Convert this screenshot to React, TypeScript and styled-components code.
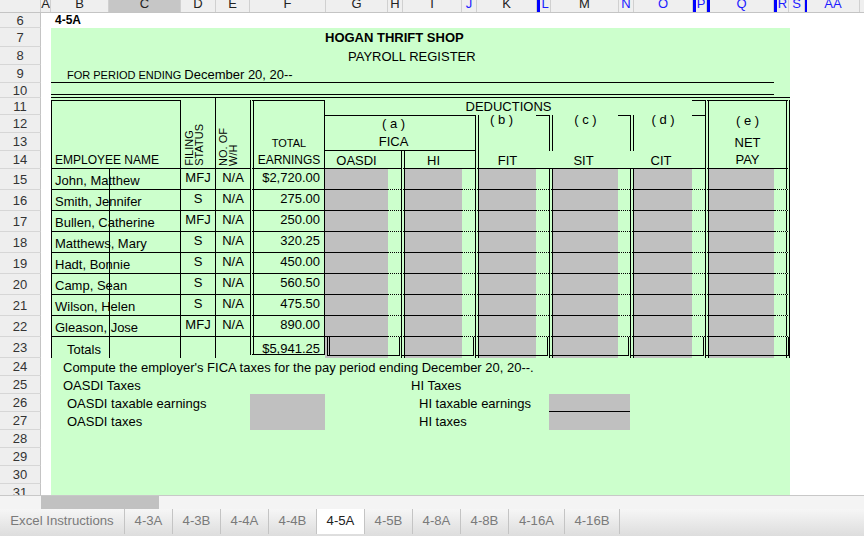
import styled, { createGlobalStyle, css } from 'styled-components'

const GREEN = '#ccffcc'
const GRAY = '#c0c0c0'
const INK = '#000'

const GlobalStyle = createGlobalStyle`
  * { box-sizing: border-box; }
  html, body { margin: 0; padding: 0; background: #fff; }
  body { font-family: 'Liberation Sans', Arial, sans-serif; color: #000; overflow: hidden; }
`

// sheet columns, in grid order (ROW = the row-number gutter)
const COLS = ['ROW', 'A', 'B', 'C', 'D', 'E', 'F', 'G', 'H', 'I', 'J', 'K', 'L', 'M', 'N', 'O', 'P', 'Q', 'R', 'S', 'AA', 'REST']
const colAt = (c: string) => COLS.indexOf(c) + 1
const colSpan = (from: string, to: string = from) => `${colAt(from)} / ${colAt(to) + 1}`
const rowSpan = (from: number, to: number = from) => `${from - 5} / ${to - 4}`

type Place = { $c: string; $ce?: string; $r: number; $re?: number }

const placed = css<Place>`
  grid-column: ${p => colSpan(p.$c, p.$ce)};
  grid-row: ${p => rowSpan(p.$r, p.$re)};
  min-width: 0;
`

const Window = styled.div`
  width: 864px;
  height: 536px;
  display: flex;
  flex-direction: column;
  overflow: hidden;
`

/* column letters */
const ColBar = styled.div`
  flex: 0 0 13px;
  display: flex;
  background: #efefef;
  border-bottom: 1px solid #c4c4c4;
  overflow: hidden;
`

const ColHead = styled.div<{ $w: number; $blue?: boolean; $sel?: boolean }>`
  flex: 0 0 ${p => p.$w}px;
  height: 12px;
  border-right: 1px solid #d0d0d0;
  background: ${p => (p.$sel ? '#c6c6c6' : 'transparent')};
  color: ${p => (p.$blue ? '#1c1cff' : '#222')};
  font-size: 13px;
  line-height: 7px;
  text-align: center;
  overflow: hidden;
  white-space: nowrap;
`

const HiddenMark = styled.div<{ $w: number }>`
  flex: 0 0 ${p => p.$w}px;
  background: #0000ff;
`

/* the sheet body */
const Sheet = styled.div`
  flex: 0 0 482px;
  display: grid;
  grid-template-columns: 41px 10px 58px 72px 35px 34px 75px 63px 13px 61px 13px 61px 13px 69px 12px 62px 13px 69px 16px 17px 53px 1fr;
  grid-template-rows: 15px 19px 18px 18px 15px 17px 18px 18px 18px repeat(8, 21px) 21px repeat(8, 18px);
  overflow: hidden;
  font-size: 13px;
`

const RowNum = styled.div<{ $r: number }>`
  grid-column: 1 / 2;
  grid-row: ${p => rowSpan(p.$r)};
  display: flex;
  align-items: center;
  justify-content: center;
  background: #eeeeee;
  border-right: 1px solid #c4c4c4;
  border-bottom: 1px solid #d6d6d6;
  color: #333;
  font-size: 13px;
`

const Panel = styled.div<Place>`
  ${placed}
  background: ${GREEN};
`

const SheetTitle = styled.div<Place>`
  ${placed}
  padding-left: 4px;
  font-size: 12px;
  font-weight: bold;
  line-height: 14px;
  white-space: nowrap;
`

const TitleLine = styled.div<Place & { $bold?: boolean; $indent: number }>`
  ${placed}
  display: flex;
  align-items: center;
  padding-left: ${p => p.$indent}px;
  font-size: 13px;
  font-weight: ${p => (p.$bold ? 'bold' : 'normal')};
  white-space: nowrap;
`

const PeriodLine = styled.div<Place>`
  ${placed}
  display: flex;
  align-items: baseline;
  gap: 3px;
  padding: 2px 0 0 16px;
  border-bottom: 1px solid ${INK};
  font-size: 13px;
  line-height: 15px;
  white-space: nowrap;

  small { font-size: 11px; }
`

const Rule = styled.div<Place & { $double?: boolean }>`
  ${placed}
  border-bottom: ${p => (p.$double ? '4px double' : '1px solid')} ${INK};
`

/* table heading */
const NameHead = styled.div<Place>`
  ${placed}
  margin-top: 2px;
  border: 1px solid ${INK};
  display: flex;
  align-items: flex-end;
  padding: 0 0 0 3px;
  font-size: 12px;
  line-height: 16px;
  white-space: nowrap;
`

const RotHead = styled.div<Place & { $edge?: boolean; $pad: number }>`
  ${placed}
  display: flex;
  align-items: flex-end;
  padding: 0 0 2px ${p => p.$pad}px;
  border-right: ${p => (p.$edge ? `1px solid ${INK}` : 'none')};
  border-bottom: 1px solid ${INK};
`

const RotText = styled.span`
  writing-mode: vertical-rl;
  transform: rotate(180deg);
  font-size: 11px;
  line-height: 10px;
  white-space: pre;
`

const EarnHead = styled.div<Place>`
  ${placed}
  margin-top: 2px;
  border-top: 1px solid ${INK};
  border-right: 1px solid ${INK};
  border-bottom: 1px solid ${INK};
  border-left: 4px double ${INK};
  display: flex;
  flex-direction: column;
  justify-content: flex-end;
  align-items: center;
  line-height: 18px;
  white-space: nowrap;
`

const HeadWord = styled.span<{ $size: number }>`
  font-size: ${p => p.$size}px;
  margin-bottom: -1px;
`

const DedTitle = styled.div<Place>`
  ${placed}
  text-align: center;
  font-size: 13px;
  line-height: 18px;
`

const StubTop = styled.div<Place & { $drop?: boolean }>`
  ${placed}
  margin-top: ${p => (p.$drop ? '2px' : '0')};
  border-top: 1px solid ${INK};
`

const FicaBox = styled.div<Place>`
  ${placed}
  border-top: 1px solid ${INK};
  border-bottom: 1px solid ${INK};
`

const FicaText = styled.div<Place>`
  ${placed}
  text-align: center;
  font-size: 13px;
  line-height: 18px;
  white-space: pre;
`

const SideHead = styled.div<Place & { $nudge?: number }>`
  ${placed}
  border-left: 4px double ${INK};
  padding-right: ${p => p.$nudge ?? 0}px;
  text-align: center;
  font-size: 13px;
  line-height: 13px;
  white-space: pre;
`

const Tag = styled.div`
  margin-top: -2px;
`

const SubHead = styled.div<Place & { $split?: boolean; $gap: number }>`
  ${placed}
  border-bottom: 1px solid ${INK};
  border-left: ${p => (p.$split ? `4px double ${INK}` : 'none')};
  padding: 1px ${p => p.$gap}px 0 0;
  text-align: center;
  font-size: 13px;
  line-height: 17px;
`

const NetBox = styled.div<Place>`
  ${placed}
  margin-top: 2px;
  border-top: 1px solid ${INK};
  border-bottom: 1px solid ${INK};
  border-left: 4px double ${INK};
  border-right: 4px double ${INK};
  display: flex;
  flex-direction: column;
  justify-content: flex-end;
  align-items: center;
  font-size: 13px;
  line-height: 18px;
  white-space: pre;

  span { margin-bottom: -1px; }

  span:first-child {
    line-height: 13px;
    margin-bottom: 7px;
  }
`

/* table body */
const NameCell = styled.div<Place & { $indent: number }>`
  ${placed}
  display: flex;
  align-items: flex-end;
  padding-left: ${p => p.$indent}px;
  border-left: 1px solid ${INK};
  border-bottom: ${p => (p.$r === 23 ? 'none' : `1px solid ${INK}`)};
  line-height: 16px;
  white-space: nowrap;
`

const NameSplit = styled.div<Place & { $open?: boolean }>`
  ${placed}
  border-left: 1px solid ${INK};
  border-right: 1px solid ${INK};
  border-bottom: ${p => (p.$open ? 'none' : `1px solid ${INK}`)};
`

const CodeCell = styled.div<Place & { $edge?: boolean; $open?: boolean }>`
  ${placed}
  padding-top: 1px;
  border-right: ${p => (p.$edge ? `1px solid ${INK}` : 'none')};
  border-bottom: ${p => (p.$open ? 'none' : `1px solid ${INK}`)};
  text-align: center;
  line-height: 16px;
`

const AmountCell = styled.div<Place & { $total?: boolean }>`
  ${placed}
  padding: ${p => (p.$total ? '4px' : '1px')} 4px 0 0;
  margin-bottom: ${p => (p.$total ? '3px' : '0')};
  border-left: 4px double ${INK};
  border-right: 1px solid ${INK};
  border-bottom: 1px solid ${INK};
  text-align: right;
  line-height: 16px;
  white-space: nowrap;
`

const InputCell = styled.div<Place & { $split?: boolean; $open?: boolean }>`
  ${placed}
  background: ${GRAY};
  background-clip: padding-box;
  border-left: ${p => (p.$split ? `4px double ${INK}` : 'none')};
  border-bottom: ${p => (p.$open ? 'none' : `1px solid ${INK}`)};
`

const GapCell = styled.div<Place & { $end?: boolean; $open?: boolean }>`
  ${placed}
  border-bottom: ${p => (p.$open ? 'none' : `1px dotted ${INK}`)};
  border-right: ${p => (p.$end ? `4px double ${INK}` : 'none')};
`

const TotalBox = styled.div<Place & { $first?: boolean }>`
  ${placed}
  margin: 0 1px 2px ${p => (p.$first ? '2px' : '0')};
  border-right: 1px solid ${INK};
  border-bottom: 1px solid ${INK};
  border-left: ${p => (p.$first ? `3px double ${INK}` : 'none')};
`

/* below the table */
const Note = styled.div<Place & { $indent: number }>`
  ${placed}
  display: flex;
  align-items: center;
  padding-left: ${p => p.$indent}px;
  white-space: nowrap;
`

const AnswerBox = styled.div<Place & { $ruled?: boolean }>`
  ${placed}
  background: ${GRAY};
  border-bottom: ${p => (p.$ruled ? `1px solid ${INK}` : 'none')};
`

/* bottom chrome */
const ScrollTrack = styled.div`
  flex: 0 0 14px;
  display: flex;
  background: #f4f4f4;
  border-top: 1px solid #c8c8c8;
`

const ScrollThumb = styled.div`
  margin-left: 41px;
  width: 118px;
  background: #c1c1c1;
`

const TabBar = styled.div`
  flex: 1;
  display: flex;
  background: linear-gradient(#f6f6f6, #dddddd);
`

const Tab = styled.div<{ $w: number; $active?: boolean }>`
  flex: 0 0 ${p => p.$w}px;
  display: flex;
  align-items: center;
  justify-content: center;
  padding-bottom: 2px;
  margin-bottom: 2px;
  border-right: 1px solid #c4c4c4;
  background: ${p => (p.$active ? '#fff' : 'transparent')};
  color: ${p => (p.$active ? '#222' : '#7a7a7a')};
  font-size: 13.2px;
  white-space: nowrap;
`

const HEAD: { l?: string; w: number; blue?: boolean; sel?: boolean; bar?: boolean }[] = [
  { w: 41 }, { l: 'A', w: 10 }, { l: 'B', w: 58 }, { l: 'C', w: 72, sel: true }, { l: 'D', w: 35 },
  { l: 'E', w: 34 }, { l: 'F', w: 76 }, { l: 'G', w: 62 }, { l: 'H', w: 15 }, { l: 'I', w: 59 },
  { l: 'J', w: 15, blue: true }, { l: 'K', w: 60 }, { w: 3, bar: true }, { l: 'L', w: 11, blue: true },
  { l: 'M', w: 68 }, { l: 'N', w: 15, blue: true }, { l: 'O', w: 59, blue: true }, { w: 3, bar: true },
  { l: 'P', w: 11, blue: true }, { w: 3, bar: true }, { l: 'Q', w: 64, blue: true }, { w: 3, bar: true },
  { l: 'R', w: 12, blue: true }, { l: 'S', w: 16, blue: true }, { w: 2, bar: true }, { l: 'AA', w: 53, blue: true },
  { w: 60 },
]

const EMPLOYEES = [
  ['John, Matthew', 'MFJ', '$2,720.00'],
  ['Smith, Jennifer', 'S', '275.00'],
  ['Bullen, Catherine', 'MFJ', '250.00'],
  ['Matthews, Mary', 'S', '320.25'],
  ['Hadt, Bonnie', 'S', '450.00'],
  ['Camp, Sean', 'S', '560.50'],
  ['Wilson, Helen', 'S', '475.50'],
  ['Gleason, Jose', 'MFJ', '890.00'],
]

const GROUPS = [
  { input: 'G', gap: 'H' },
  { input: 'I', gap: 'J' },
  { input: 'K', gap: 'L' },
  { input: 'M', gap: 'N' },
  { input: 'O', gap: 'P' },
  { input: 'Q', gap: 'R' },
]

const TABS: [string, number][] = [
  ['Excel Instructions', 125], ['4-3A', 48], ['4-3B', 48], ['4-4A', 48], ['4-4B', 48], ['4-5A', 48],
  ['4-5B', 48], ['4-8A', 48], ['4-8B', 48], ['4-16A', 56], ['4-16B', 55],
]

export default function App() {
  const sheetRows = Array.from({ length: 26 }, (_, i) => i + 6)

  return (
    <Window>
      <GlobalStyle />
      <ColBar>
        {HEAD.map((h, i) =>
          h.bar ? <HiddenMark key={i} $w={h.w} /> : (
            <ColHead key={i} $w={h.w} $blue={h.blue} $sel={h.sel}>{h.l}</ColHead>
          )
        )}
      </ColBar>

      <Sheet>
        {sheetRows.map(r => <RowNum key={r} $r={r}>{r}</RowNum>)}
        <Panel $c='B' $ce='R' $r={7} $re={31} />

        {/* Title */}
        <SheetTitle $c='B' $ce='E' $r={6}>4-5A</SheetTitle>
        <TitleLine $c='G' $ce='R' $r={7} $bold $indent={0}>HOGAN THRIFT SHOP</TitleLine>
        <TitleLine $c='G' $ce='R' $r={8} $indent={23}>PAYROLL REGISTER</TitleLine>
        <PeriodLine $c='B' $ce='Q' $r={9}>
          <small>FOR PERIOD ENDING</small>
          <span>December 20, 20--</span>
        </PeriodLine>
        <Rule $c='B' $ce='Q' $r={10} $double />
        <Rule $c='R' $r={10} />

        {/* Heading */}
        <NameHead $c='B' $ce='C' $r={11} $re={14}>EMPLOYEE NAME</NameHead>
        <RotHead $c='D' $r={11} $re={14} $edge $pad={3}><RotText>{'FILING\nSTATUS'}</RotText></RotHead>
        <RotHead $c='E' $r={11} $re={14} $pad={2}><RotText>{'NO. OF\nW/H'}</RotText></RotHead>
        <EarnHead $c='F' $r={11} $re={14}>
          <HeadWord $size={11}>TOTAL</HeadWord>
          <HeadWord $size={12}>EARNINGS</HeadWord>
        </EarnHead>

        <DedTitle $c='G' $ce='O' $r={11}>DEDUCTIONS</DedTitle>
        <StubTop $c='P' $r={11} $drop />
        <FicaBox $c='G' $ce='J' $r={12} $re={13} />
        <FicaText $c='G' $ce='I' $r={12}>( a )</FicaText>
        <FicaText $c='G' $ce='I' $r={13}>FICA</FicaText>
        <SideHead $c='K' $r={12} $re={13} $nudge={12}><Tag>( b )</Tag></SideHead>
        <StubTop $c='L' $r={12} />
        <SideHead $c='M' $r={12} $re={13}><Tag>( c )</Tag></SideHead>
        <StubTop $c='N' $r={12} />
        <SideHead $c='O' $r={12} $re={13}><Tag>( d )</Tag></SideHead>
        <StubTop $c='P' $r={12} />
        <NetBox $c='Q' $ce='R' $r={11} $re={14}>
          <span>( e )</span>
          <span>NET</span>
          <span>PAY</span>
        </NetBox>

        <SubHead $c='G' $ce='H' $r={14} $gap={13}>OASDI</SubHead>
        <SubHead $c='I' $ce='J' $r={14} $gap={13} $split>HI</SubHead>
        <SubHead $c='K' $ce='L' $r={14} $gap={13} $split>FIT</SubHead>
        <SubHead $c='M' $ce='N' $r={14} $gap={12}>SIT</SubHead>
        <SubHead $c='O' $ce='P' $r={14} $gap={13}>CIT</SubHead>

        {/* Employees */}
        {EMPLOYEES.map(([name, status, pay], i) => {
          const r = 15 + i
          return [
            <NameCell key={`n${r}`} $c='B' $r={r} $indent={3}>{name}</NameCell>,
            <NameSplit key={`c${r}`} $c='C' $r={r} />,
            <CodeCell key={`d${r}`} $c='D' $r={r} $edge>{status}</CodeCell>,
            <CodeCell key={`e${r}`} $c='E' $r={r}>N/A</CodeCell>,
            <AmountCell key={`f${r}`} $c='F' $r={r}>{pay}</AmountCell>,
            ...GROUPS.map((g, gi) => [
              <InputCell key={`${g.input}${r}`} $c={g.input} $r={r} $split={gi > 0} />,
              <GapCell key={`${g.gap}${r}`} $c={g.gap} $r={r} $end={gi === 5} />,
            ]),
          ]
        })}

        {/* Totals */}
        <NameCell $c='B' $r={23} $indent={15}>Totals</NameCell>
        <NameSplit $c='C' $r={23} $open />
        <CodeCell $c='D' $r={23} $edge $open />
        <AmountCell $c='F' $r={23} $total>$5,941.25</AmountCell>
        {GROUPS.map((g, gi) => [
          <InputCell key={`${g.input}t`} $c={g.input} $r={23} $split={gi > 0} $open />,
          <GapCell key={`${g.gap}t`} $c={g.gap} $r={23} $end={gi === 5} $open />,
          <TotalBox key={`${g.input}b`} $c={g.input} $ce={g.gap} $r={23} $first={gi === 0} />,
        ])}

        {/* Employer taxes */}
        <Note $c='B' $ce='R' $r={24} $indent={12}>
          Compute the employer's FICA taxes for the pay period ending December 20, 20--.
        </Note>
        <Note $c='B' $ce='E' $r={25} $indent={12}>OASDI Taxes</Note>
        <Note $c='I' $ce='L' $r={25} $indent={10}>HI Taxes</Note>
        <Note $c='B' $ce='E' $r={26} $indent={16}>OASDI taxable earnings</Note>
        <Note $c='B' $ce='E' $r={27} $indent={16}>OASDI taxes</Note>
        <AnswerBox $c='F' $r={26} $re={27} />
        <Note $c='I' $ce='L' $r={26} $indent={18}>HI taxable earnings</Note>
        <Note $c='I' $ce='L' $r={27} $indent={18}>HI taxes</Note>
        <AnswerBox $c='M' $ce='N' $r={26} $ruled />
        <AnswerBox $c='M' $ce='N' $r={27} />
      </Sheet>

      <ScrollTrack>
        <ScrollThumb />
      </ScrollTrack>
      <TabBar>
        {TABS.map(([t, w]) => <Tab key={t} $w={w} $active={t === '4-5A'}>{t}</Tab>)}
      </TabBar>
    </Window>
  )
}
